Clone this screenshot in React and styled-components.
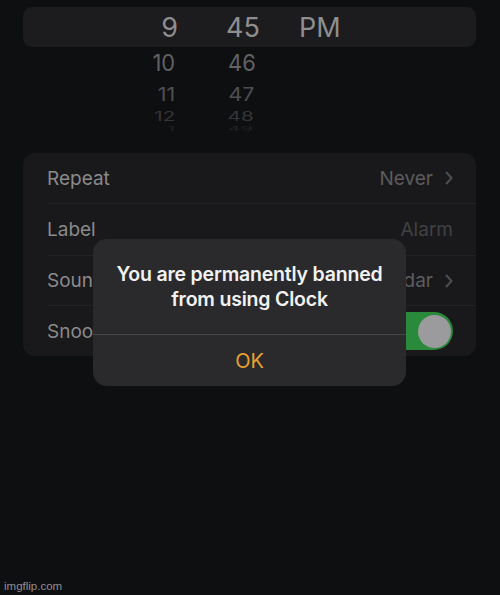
import React from "react";
import styled, { createGlobalStyle } from "styled-components";

const Global = createGlobalStyle`
  html, body { margin: 0; padding: 0; background: #0e0f11; }
  body { font-family: Inter, "Noto Sans", "Liberation Sans", sans-serif; -webkit-font-smoothing: antialiased; }
`;

const Page = styled.div`
  position: relative;
  min-height: 595px;
  box-sizing: border-box;
  padding: 7px 24px 0 23px;
  display: flex;
  flex-direction: column;
  overflow: hidden;
`;

const Picker = styled.div`
  display: flex;
  flex-direction: column;
`;

const PickerRow = styled.div`
  display: grid;
  grid-template-columns: 155px 84px 1fr;
  align-items: center;
  height: ${(p) => p.$h}px;
  border-radius: 9px;
  background: ${(p) => (p.$selected ? "#1c1c1f" : "transparent")};
  color: ${(p) => p.$color};
  font-size: ${(p) => p.$size}px;
  line-height: ${(p) => Math.min(p.$size, p.$h)}px;
`;

const Cell = styled.span`
  display: block;
  text-align: ${(p) => p.$align || "right"};
  padding-left: ${(p) => p.$pl || 0}px;
  padding-right: ${(p) => p.$pr || 0}px;
  transform: scale(${(p) => p.$sx || 1}, ${(p) => p.$sy || 1});
  transform-origin: ${(p) => p.$origin || "right center"};
`;

const Card = styled.div`
  margin-top: 19px;
  background: #19191b;
  border-radius: 12px;
  display: flex;
  flex-direction: column;
`;

const Row = styled.div`
  display: flex;
  align-items: center;
  justify-content: space-between;
  box-sizing: border-box;
  height: ${(p) => p.$h || 51}px;
  margin-left: 24px;
  padding-right: 23px;
  border-bottom: ${(p) => (p.$last ? "none" : "1px solid #232325")};
`;

const Label = styled.span`
  color: #8a8a8c;
  font-size: 19px;
`;

const Value = styled.span`
  display: flex;
  align-items: center;
  gap: 12px;
  color: ${(p) => (p.$placeholder ? "#414143" : "#5c5c5e")};
  font-size: 19px;
`;

const Toggle = styled.div`
  width: 65px;
  height: 38px;
  border-radius: 19px;
  background: #2a8a3c;
  display: flex;
  align-items: center;
  justify-content: flex-end;
  padding: 0 2px;
  box-sizing: border-box;
`;

const Knob = styled.div`
  width: 33px;
  height: 33px;
  border-radius: 50%;
  background: #9b9b9d;
`;

const Dialog = styled.div`
  position: absolute;
  left: 93px;
  top: 239px;
  width: 313px;
  background: #2a2a2c;
  border-radius: 14px;
  display: flex;
  flex-direction: column;
  overflow: hidden;
`;

const DialogTitle = styled.div`
  padding: 23px 16px 22px;
  text-align: center;
  color: #f2f2f2;
  font-size: 19.5px;
  font-weight: 600;
  line-height: 25px;
  letter-spacing: -0.2px;
  border-bottom: 1px solid #47474a;
`;

const DialogButton = styled.div`
  height: 51px;
  display: flex;
  align-items: center;
  justify-content: center;
  color: #e6a032;
  font-size: 20px;
`;

const Watermark = styled.div`
  margin-top: auto;
  margin-left: -19px;
  padding-bottom: 3px;
  color: #8e8e90;
  font-family: "Liberation Sans", Arial, sans-serif;
  font-size: 11.5px;
`;

const Chevron = () => (
  <svg width="8" height="14" viewBox="0 0 8 14">
    <polyline points="1.5,1.5 6.5,7 1.5,12.5" fill="none" stroke="#4e4e50" strokeWidth="2" strokeLinecap="round" strokeLinejoin="round" />
  </svg>
);

const pickerRows = [
  { h: 40, size: 27, color: "#8e8e90", vals: ["9", "45", "PM"], sel: true, sx: 1, sy: 1 },
  { h: 32, size: 23, color: "#616163", vals: ["10", "46", ""], sx: 0.95, sy: 1 },
  { h: 31, size: 23, color: "#4e4e50", vals: ["11", "47", ""], sx: 0.93, sy: 0.82 },
  { h: 14, size: 23, color: "#353537", vals: ["12", "48", ""], sx: 0.9, sy: 0.55 },
  { h: 10, size: 23, color: "#222224", vals: ["1", "49", ""], sx: 0.88, sy: 0.28 },
];

export default function App() {
  return (
    <>
      <Global />
      <Page>
        <Picker>
          {pickerRows.map((r, i) => (
            <PickerRow key={i} $h={r.h} $size={r.size} $color={r.color} $selected={r.sel}>
              <Cell $sx={r.sx} $sy={r.sy} $pr={i === 0 ? 0 : 3}>{r.vals[0]}</Cell>
              <Cell $sx={r.sx} $sy={r.sy} $align="center" $origin="center" $pl={46} $pr={0}>{r.vals[1]}</Cell>
              <Cell $align="left" $origin="left center" $pl={37}>{r.vals[2]}</Cell>
            </PickerRow>
          ))}
        </Picker>
        <Card>
          <Row>
            <Label>Repeat</Label>
            <Value>Never<Chevron /></Value>
          </Row>
          <Row $h={52}>
            <Label>Label</Label>
            <Value $placeholder>Alarm</Value>
          </Row>
          <Row $h={50}>
            <Label>Sound</Label>
            <Value>Radar<Chevron /></Value>
          </Row>
          <Row $last $h={50}>
            <Label>Snooze</Label>
            <Toggle><Knob /></Toggle>
          </Row>
        </Card>
        <Dialog>
          <DialogTitle>You are permanently banned<br />from using Clock</DialogTitle>
          <DialogButton>OK</DialogButton>
        </Dialog>
        <Watermark>imgflip.com</Watermark>
      </Page>
    </>
  );
}
